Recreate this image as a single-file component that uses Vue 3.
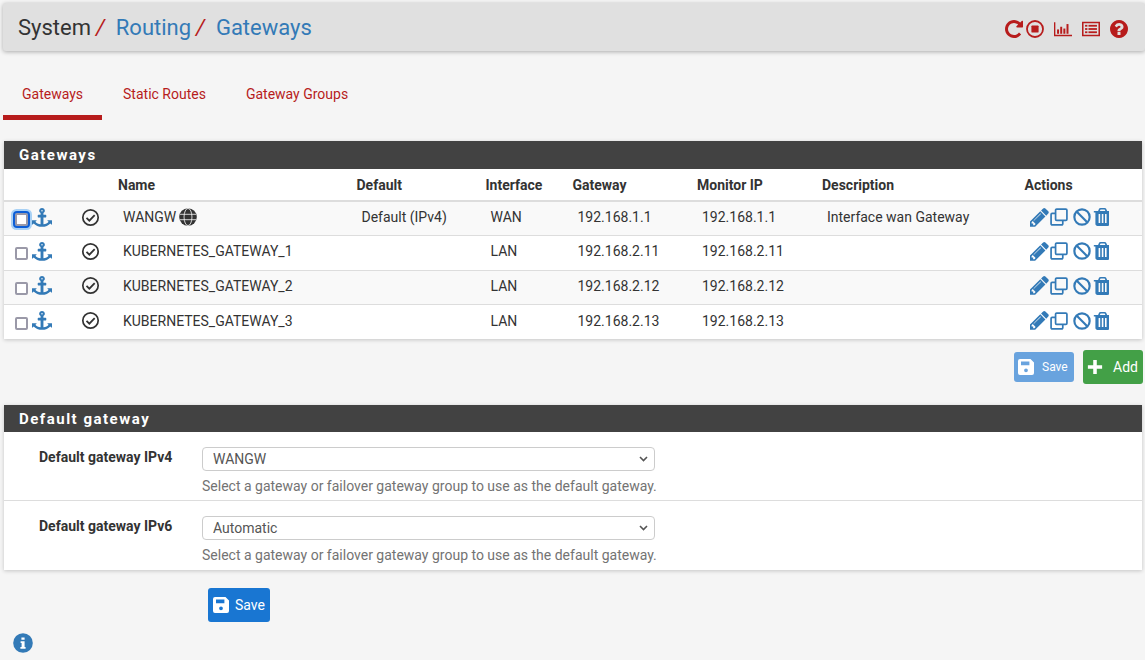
<script setup>
const gateways = [
  { name: 'WANGW', globe: true, def: 'Default (IPv4)', iface: 'WAN', gateway: '192.168.1.1', monitor: '192.168.1.1', desc: 'Interface wan Gateway', focus: true },
  { name: 'KUBERNETES_GATEWAY_1', def: '', iface: 'LAN', gateway: '192.168.2.11', monitor: '192.168.2.11', desc: '' },
  { name: 'KUBERNETES_GATEWAY_2', def: '', iface: 'LAN', gateway: '192.168.2.12', monitor: '192.168.2.12', desc: '' },
  { name: 'KUBERNETES_GATEWAY_3', def: '', iface: 'LAN', gateway: '192.168.2.13', monitor: '192.168.2.13', desc: '' }
]

const defaults = [
  { label: 'Default gateway IPv4', value: 'WANGW' },
  { label: 'Default gateway IPv6', value: 'Automatic' }
]

const help = 'Select a gateway or failover gateway group to use as the default gateway.'

const anchorPath = 'M960 256q0-26-19-45t-45-19-45 19-19 45 19 45 45 19 45-19 19-45zm832 928v352q0 22-20 30-8 2-12 2-12 0-23-9l-93-93q-119 143-318.5 226.5t-429.5 83.5-429.5-83.5-318.5-226.5l-93 93q-9 9-23 9-4 0-12-2-20-8-20-30v-352q0-14 9-23t23-9h352q22 0 30 20 8 19-7 35l-100 100q67 91 189.5 153.5t271.5 82.5v-647h-192q-26 0-45-19t-19-45v-128q0-26 19-45t45-19h192v-163q-58-34-93-92.5t-35-128.5q0-106 75-181t181-75 181 75 75 181q0 70-35 128.5t-93 92.5v163h192q26 0 45 19t19 45v128q0 26-19 45t-45 19h-192v647q149-20 271.5-82.5t189.5-153.5l-100-100q-15-16-7-35 8-20 30-20h352q14 0 23 9t9 23z'
const pencilPath = 'M491 1536l91-91-235-235-91 91v107h128v128h107zm523-928q0-22-22-22-10 0-17 7l-542 542q-7 7-7 17 0 22 22 22 10 0 17-7l542-542q7-7 7-17zm-54-192l416 416-832 832h-416v-416zm683 96q0 53-37 90l-166 166-416-416 166-165q36-38 90-38 53 0 91 38l235 234q37 39 37 91z'
const trashPath = 'M704 1376v-704q0-14-9-23t-23-9h-64q-14 0-23 9t-9 23v704q0 14 9 23t23 9h64q14 0 23-9t9-23zm256 0v-704q0-14-9-23t-23-9h-64q-14 0-23 9t-9 23v704q0 14 9 23t23 9h64q14 0 23-9t9-23zm256 0v-704q0-14-9-23t-23-9h-64q-14 0-23 9t-9 23v704q0 14 9 23t23 9h64q14 0 23-9t9-23zm-544-992h448l-48-117q-7-9-17-11h-317q-10 2-17 11zm928 32v64q0 14-9 23t-23 9h-96v948q0 83-47 143.5t-113 60.5h-832q-66 0-113-58.5t-47-141.5v-952h-96q-14 0-23-9t-9-23v-64q0-14 9-23t23-9h309l70-167q15-37 54-63t79-26h320q40 0 79 26t54 63l70 167h309q14 0 23 9t9 23z'
const repeatPath = 'M1664 256v448q0 26-19 45t-45 19h-448q-42 0-59-40-17-39 14-69l138-138q-148-137-349-137-104 0-198.5 40.5t-163.5 109.5-109.5 163.5-40.5 198.5 40.5 198.5 109.5 163.5 163.5 109.5 198.5 40.5q119 0 225-52t179-147q7-10 23-12 15 0 25 9l137 138q9 8 9.5 20.5t-7.5 22.5q-109 132-264 204.5t-327 72.5q-156 0-298-61t-245-164-164-245-61-298 61-298 164-245 245-164 298-61q147 0 284.5 55.5t244.5 156.5l130-129q29-31 70-14 39 17 39 59z'
const questionPath = 'M1024 1376v-192q0-14-9-23t-23-9h-192q-14 0-23 9t-9 23v192q0 14 9 23t23 9h192q14 0 23-9t9-23zm256-672q0-88-55.5-163t-138.5-116-170-41q-243 0-371 213-15 24 8 42l132 100q7 6 19 6 16 0 25-12 53-68 86-92 34-24 86-24 48 0 85.5 26t37.5 59q0 38-20 61t-68 45q-63 28-115.5 86.5t-52.5 125.5v36q0 14 9 23t23 9h192q14 0 23-9t9-23q0-19 21.5-49.5t54.5-49.5q32-18 49-28.5t46-35 44.5-48 28-60.5 12.5-81zm384 192q0 209-103 385.5t-279.5 279.5-385.5 103-385.5-103-279.5-279.5-103-385.5 103-385.5 279.5-279.5 385.5-103 385.5 103 279.5 279.5 103 385.5z'
const savePath = 'M2 0h10.5L16 3.5V14a2 2 0 0 1-2 2H2a2 2 0 0 1-2-2V2a2 2 0 0 1 2-2zM3 2.6v3.6h8.4V2.6zM8 9.4a1.9 1.9 0 1 0 0 3.8 1.9 1.9 0 0 0 0-3.8z'
</script>

<template>
  <div class="page">
    <header class="crumbs">
      <h1 class="crumb-title">
        <span>System</span><i class="sep">/</i>
        <a class="crumb-link">Routing</a><i class="sep">/</i>
        <a class="crumb-link">Gateways</a>
      </h1>
      <div class="crumb-icons">
        <svg class="ci" viewBox="128 128 1536 1536"><path :d="repeatPath" fill="currentColor" /></svg>
        <svg class="ci ci-stop" viewBox="0 0 20 20"><circle cx="10" cy="10" r="8.9" fill="none" stroke="currentColor" stroke-width="2" /><rect x="6" y="6" width="8" height="8" rx="1" fill="currentColor" /></svg>
        <svg class="ci" viewBox="0 0 20 20" fill="currentColor"><path d="M0 2.5h1.5v14H20V18H0z" /><rect x="3.4" y="10.5" width="2.2" height="4.8" /><rect x="6.9" y="7.5" width="2.2" height="7.8" /><rect x="10.4" y="9.5" width="2.2" height="5.8" /><rect x="13.9" y="4.5" width="2.2" height="10.8" /></svg>
        <svg class="ci" viewBox="0 0 20 20" fill="currentColor"><path fill-rule="evenodd" d="M0 2h20v16H0zM1.7 3.7v12.6h16.6V3.7z" /><rect x="3.4" y="5.4" width="2.6" height="2" /><rect x="7.2" y="5.4" width="9.4" height="2" /><rect x="3.4" y="9" width="2.6" height="2" /><rect x="7.2" y="9" width="9.4" height="2" /><rect x="3.4" y="12.6" width="2.6" height="2" /><rect x="7.2" y="12.6" width="9.4" height="2" /></svg>
        <svg class="ci" viewBox="128 128 1536 1536"><path :d="questionPath" fill="currentColor" /></svg>
      </div>
    </header>

    <nav class="tabs">
      <a class="tab active">Gateways</a>
      <a class="tab">Static Routes</a>
      <a class="tab">Gateway Groups</a>
    </nav>

    <section class="panel first">
      <h2 class="panel-head">Gateways</h2>
      <table class="gw-table">
        <colgroup>
          <col style="width: 72px" /><col style="width: 42px" /><col style="width: 238.5px" /><col style="width: 129px" />
          <col style="width: 87px" /><col style="width: 124.5px" /><col style="width: 125px" /><col style="width: 202.5px" /><col />
        </colgroup>
        <thead>
          <tr>
            <th></th><th></th><th>Name</th><th>Default</th><th>Interface</th><th>Gateway</th><th>Monitor IP</th><th>Description</th><th>Actions</th>
          </tr>
        </thead>
        <tbody>
          <tr v-for="gw in gateways" :key="gw.name">
            <td class="tick-cell">
              <div class="tick-wrap">
                <input type="checkbox" class="tick" :class="{ focused: gw.focus }" />
                <svg class="anchor" viewBox="0 0 1792 1792" preserveAspectRatio="none"><path :d="anchorPath" fill="currentColor" /></svg>
              </div>
            </td>
            <td class="status-cell">
              <svg class="status" viewBox="0 0 20 20"><circle cx="10" cy="10" r="8.1" fill="none" stroke="currentColor" stroke-width="1.8" /><path d="M5.8 10.4l3 3 5.6-6" fill="none" stroke="currentColor" stroke-width="1.9" /></svg>
            </td>
            <td>
              <span class="gw-name">{{ gw.name }}
                <svg v-if="gw.globe" class="globe" viewBox="0 0 20 20"><circle cx="10" cy="10" r="9.8" fill="#333" /><g fill="none" stroke="#f9f9f9" stroke-width="0.9"><ellipse cx="10" cy="10" rx="4.4" ry="9.5" /><path d="M.8 7h18.4M.8 13h18.4" /></g></svg>
              </span>
            </td>
            <td>{{ gw.def }}</td>
            <td>{{ gw.iface }}</td>
            <td>{{ gw.gateway }}</td>
            <td>{{ gw.monitor }}</td>
            <td>{{ gw.desc }}</td>
            <td class="act-cell">
              <div class="acts">
                <svg class="act act-pencil" viewBox="128 149 1536 1536"><path :d="pencilPath" fill="currentColor" /></svg>
                <svg class="act act-clone" viewBox="0 0 20 20" fill="none" stroke="currentColor" stroke-width="1.9"><rect x="6.2" y="1.2" width="12.6" height="12.6" rx="1.2" /><path d="M6 6H2.4a1.2 1.2 0 0 0-1.2 1.2v10.4a1.2 1.2 0 0 0 1.2 1.2H13a1.2 1.2 0 0 0 1.2-1.2V14" /></svg>
                <svg class="act act-ban" viewBox="0 0 20 20" fill="none" stroke="currentColor" stroke-width="2.4"><circle cx="10" cy="10" r="8.5" /><path d="M4.2 4.2l11.6 11.6" /></svg>
                <svg class="act act-trash" viewBox="128 128 1280 1536" preserveAspectRatio="none"><path :d="trashPath" fill="currentColor" /></svg>
              </div>
            </td>
          </tr>
        </tbody>
      </table>
    </section>

    <div class="table-btns">
      <button class="btn btn-save-off">
        <svg class="save-ico" viewBox="0 0 16 16"><path :d="savePath" fill="#fff" fill-rule="evenodd" /></svg>
        <span>Save</span>
      </button>
      <button class="btn btn-add">
        <svg class="plus" viewBox="0 0 18 18"><path d="M7 1h4v6h6v4h-6v6H7v-6H1V7h6z" fill="#fff" /></svg>
        <span>Add</span>
      </button>
    </div>

    <section class="panel second">
      <h2 class="panel-head">Default gateway</h2>
      <div v-for="row in defaults" :key="row.label" class="form-row">
        <label class="form-label">{{ row.label }}</label>
        <div class="form-field">
          <select class="form-select">
            <option>{{ row.value }}</option>
          </select>
          <div class="form-help">{{ help }}</div>
        </div>
      </div>
    </section>

    <div class="submit-row">
      <button class="btn btn-primary">
        <svg class="save-ico" viewBox="0 0 16 16"><path :d="savePath" fill="#fff" fill-rule="evenodd" /></svg>
        <span>Save</span>
      </button>
    </div>

    <svg class="info" viewBox="0 0 20 20">
      <circle cx="10" cy="10" r="9.8" fill="#337ab7" />
      <path d="M8.4 4.4h3.2v2.4H8.4zM7.6 8.2h4v5.8h1v1.8H7.4V14h1.2v-4h-1z" fill="#fff" />
    </svg>
  </div>
</template>

<style>
html,
body {
  margin: 0;
  background: #f5f5f5;
}
</style>

<style scoped>
.page {
  box-sizing: border-box;
  height: 660px;
  overflow: hidden;
  padding: 3px 2px 0 3px;
  font-family: Roboto, "Liberation Sans", sans-serif;
  font-size: 14px;
  color: #333;
}

/* Breadcrumb bar */
.crumbs {
  display: flex;
  align-items: center;
  justify-content: space-between;
  box-sizing: border-box;
  height: 48px;
  margin-right: -2px;
  padding: 0 17px 0 15px;
  background: #e0e0e0;
  border-radius: 3px;
  box-shadow: 0 1px 4px rgba(0, 0, 0, 0.3);
}

.crumb-title {
  margin: 0;
  font-size: 22px;
  font-weight: 400;
  color: #333;
}

.crumb-link {
  color: #337ab7;
}

.sep {
  margin: 0 11px 0 5px;
  font-style: italic;
  color: #b71c1c;
}

.crumb-icons {
  display: flex;
  align-items: center;
  gap: 10px;
  padding-top: 3px;
  color: #b71c1c;
}

.ci {
  display: block;
  width: 18px;
  height: 18px;
}

.ci-stop {
  margin-left: -7px;
}

/* Tabs */
.tabs {
  display: flex;
  height: 50px;
  margin-top: 19px;
}

.tab {
  display: flex;
  align-items: center;
  box-sizing: border-box;
  height: 50px;
  padding: 3px 20px 0;
  border-bottom: 5px solid transparent;
  color: #b71c1c;
  font-size: 14px;
}

.tab.active {
  padding: 3px 19px 0;
  margin-right: 1px;
  border-bottom-color: #b71c1c;
}

/* Panels */
.panel {
  margin: 21px 1px 0;
  background: #fff;
  box-shadow: 0 1px 4px rgba(0, 0, 0, 0.2);
}

.panel-head {
  box-sizing: border-box;
  height: 28px;
  margin: 0;
  padding-left: 15px;
  background: #424242;
  color: #fff;
  font-size: 15px;
  font-weight: 700;
  line-height: 28px;
  letter-spacing: 1.5px;
}

.second .panel-head {
  height: 27px;
  line-height: 29px;
}

.gw-table {
  width: 100%;
  border-collapse: collapse;
  table-layout: fixed;
  font-size: 14px;
}

.gw-table th {
  box-sizing: border-box;
  height: 32px;
  padding: 0;
  border-bottom: 2px solid #ddd;
  font-weight: 700;
  text-align: left;
}

.gw-table td {
  box-sizing: border-box;
  height: 34.5px;
  padding: 0 0 3px 5px;
  border-top: 1px solid #ddd;
  white-space: nowrap;
}

.gw-table tbody tr:nth-child(odd) {
  background: #f9f9f9;
}

.gw-table tbody tr:first-child td {
  border-top: 0;
}

.gw-table td.tick-cell {
  padding-left: 11px;
}

.gw-table td.status-cell {
  padding-left: 5px;
}

.gw-table td.act-cell {
  padding-left: 5px;
}

.tick-wrap {
  display: flex;
  align-items: center;
  gap: 4px;
}

.tick {
  appearance: none;
  box-sizing: border-box;
  width: 13px;
  height: 13px;
  margin: 5px 0 0;
  border: 2px solid #9a99a8;
  border-radius: 2px;
  background: #fff;
}

.tick.focused {
  outline: 2px solid #0b5ed7;
  outline-offset: 0;
  box-shadow: 0 0 0 4px #a8d1f5;
}

.anchor {
  display: block;
  width: 20px;
  height: 19px;
  color: #337ab7;
}

.status {
  display: block;
  width: 19px;
  height: 19px;
  color: #333;
}

.gw-name {
  display: inline-flex;
  align-items: center;
  gap: 3px;
}

.globe {
  width: 18px;
  height: 18px;
}

.acts {
  display: flex;
  align-items: center;
  color: #337ab7;
}

.act {
  display: block;
  width: 18px;
  height: 18px;
}

.act-pencil {
  width: 19px;
  height: 19px;
}

.act-clone {
  margin-left: 1px;
}

.act-ban {
  margin-left: 5px;
}

.act-trash {
  width: 16px;
  margin-left: 2px;
}

/* Buttons */
.btn {
  display: inline-flex;
  align-items: center;
  box-sizing: border-box;
  border: 1px solid transparent;
  border-radius: 3px;
  color: #fff;
  font-family: inherit;
  font-size: 14px;
}

.table-btns {
  display: flex;
  justify-content: flex-end;
  align-items: center;
  gap: 9px;
  margin-top: 11px;
}

.btn-save-off {
  gap: 8px;
  width: 60px;
  height: 30px;
  padding: 0 0 0 3px;
  background: #69a3de;
  font-size: 12px;
}

.btn-add {
  gap: 10px;
  width: 60px;
  height: 34px;
  padding: 0 0 0 3px;
  background: #43a047;
}

.save-ico {
  width: 16px;
  height: 16px;
}

.plus {
  width: 16px;
  height: 16px;
}

/* Form rows */
.form-row {
  display: flex;
  box-sizing: border-box;
  height: 69px;
  border-bottom: 1px solid #ddd;
}

.form-row:last-child {
  border-bottom: 0;
}

.form-label {
  box-sizing: border-box;
  width: 198px;
  padding: 17px 0 0 35px;
  font-size: 14px;
  font-weight: 700;
  white-space: nowrap;
}

.form-field {
  padding-top: 15px;
}

.form-select {
  appearance: none;
  display: block;
  box-sizing: border-box;
  width: 453px;
  height: 24px;
  padding: 0 10px;
  border: 1px solid #ccc;
  border-radius: 4px;
  background: #fff url("data:image/svg+xml,%3Csvg xmlns='http://www.w3.org/2000/svg' width='9' height='6'%3E%3Cpath d='M1 1l3.5 3.5L8 1' fill='none' stroke='%23555' stroke-width='1.6'/%3E%3C/svg%3E") no-repeat right 6px center;
  color: #555;
  font-family: inherit;
  font-size: 14px;
}

.form-help {
  margin-top: 7px;
  color: #737373;
  font-size: 14px;
  line-height: 16px;
}

/* Bottom */
.submit-row {
  margin: 18px 0 0 205px;
}

.btn-primary {
  gap: 6px;
  width: 62px;
  height: 34px;
  padding: 0 0 0 4px;
  background: #1976d2;
}

.info {
  display: block;
  width: 20px;
  height: 20px;
  margin: 11px 0 0 10px;
}
</style>
